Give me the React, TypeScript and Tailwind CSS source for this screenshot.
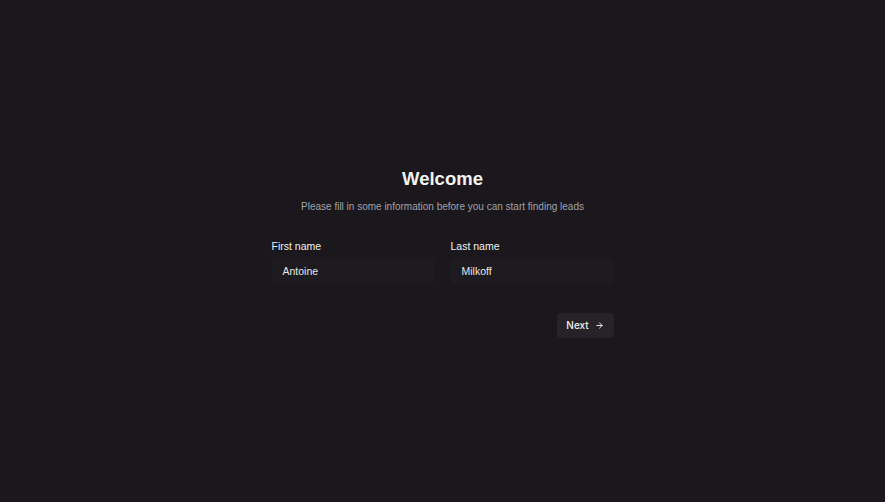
import React from "react";

export default function App() {
  return (
    <div
      className="w-full h-screen bg-[#1a181c] flex items-center justify-center text-[#ededed]"
      style={{ fontFamily: '"Liberation Sans", Arial, sans-serif' }}
    >
      <div className="w-[342px] flex flex-col mt-[3px]">
        <h1 className="text-center text-[18.5px] leading-[24px] font-bold text-[#f2f2f2]">Welcome</h1>
        <p className="mt-[9px] text-center text-[10px] leading-[14px] text-[#a3a1a6]">
          Please fill in some information before you can start finding leads
        </p>
        <div className="mt-[25px] grid grid-cols-2 gap-x-[16px]">
          <div className="flex flex-col">
            <label className="text-[10.5px] leading-[14px] text-[#f0f0f0]">First name</label>
            <div className="mt-[6px] h-[25px] rounded-[3px] bg-[#1d1b1f] flex items-center pl-[11px] text-[10.5px] text-[#e6e6e6]">
              Antoine
            </div>
          </div>
          <div className="flex flex-col">
            <label className="text-[10.5px] leading-[14px] text-[#f0f0f0]">Last name</label>
            <div className="mt-[6px] h-[25px] rounded-[3px] bg-[#1d1b1f] flex items-center pl-[11px] text-[10.5px] text-[#e6e6e6]">
              Milkoff
            </div>
          </div>
        </div>
        <div className="mt-[29px] flex justify-end">
          <button
            className="h-[25px] w-[57px] rounded-[4px] bg-[#252328] flex items-center justify-center gap-[6px] text-[10px] font-medium text-[#f0f0f0]"
            style={{ fontFamily: 'Inter, "Liberation Sans", sans-serif' }}
          >
            <span>Next</span>
            <svg width="9" height="9" viewBox="0 0 24 24" fill="none" stroke="currentColor" strokeWidth="2.5" strokeLinecap="round" strokeLinejoin="round">
              <path d="M5 12h14" />
              <path d="m12 5 7 7-7 7" />
            </svg>
          </button>
        </div>
      </div>
    </div>
  );
}
